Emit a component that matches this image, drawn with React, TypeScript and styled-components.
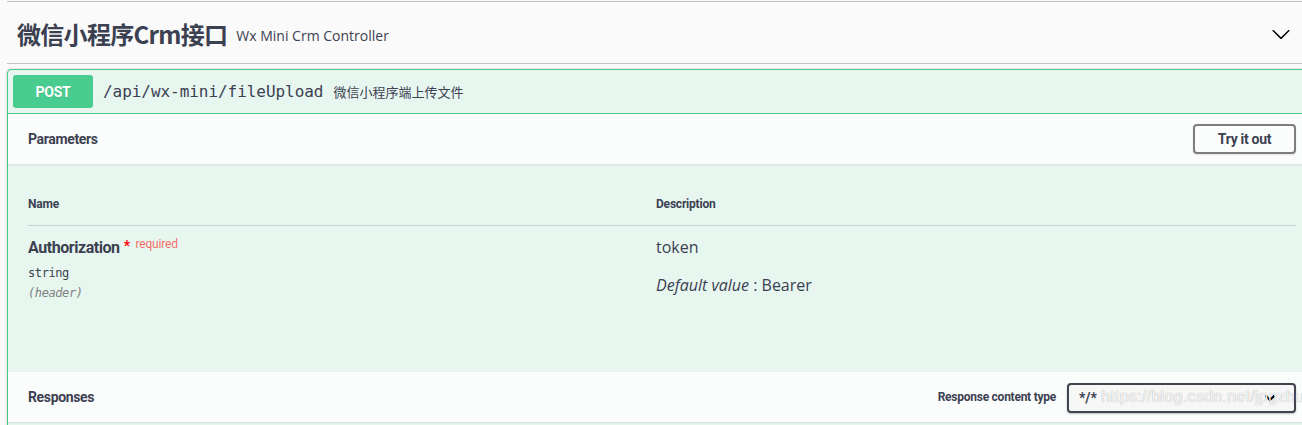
import React from "react";
import styled, { createGlobalStyle } from "styled-components";

const Global = createGlobalStyle`
  html, body { margin: 0; padding: 0; background: #fafafa; overflow: hidden; }
  body { font-family: "Open Sans", "Noto Sans CJK SC", sans-serif; color: #3b4151; }
  * { box-sizing: border-box; }
`;

const TITLE_FONT = `"Roboto", "Noto Sans CJK SC", sans-serif`;
const MONO = `"DejaVu Sans Mono", "Liberation Mono", monospace`;

const Page = styled.div`
  width: 1310px;
  margin-left: 7px;
  padding-top: 1px;
`;

const TagHeader = styled.div`
  display: flex;
  align-items: center;
  height: 63px;
  padding: 3px 26px 0 10px;
  border-top: 1px solid rgba(59, 65, 81, 0.3);
  border-bottom: 1px solid rgba(59, 65, 81, 0.3);
  margin-bottom: 5px;
`;

const TagTitle = styled.h3`
  margin: 0;
  font-family: "Noto Sans CJK SC", sans-serif;
  font-weight: 700;
  font-size: 24px;
  line-height: 30px;
  color: #3b4151;
  letter-spacing: -0.7px;
`;

const TagDesc = styled.small`
  font-family: "Open Sans", sans-serif;
  font-size: 14px;
  font-weight: 400;
  margin-left: 9px;
  color: #3b4151;
  flex: 1;
  padding-top: 2px;
`;

const Arrow = styled.svg`
  width: 20px;
  height: 20px;
  fill: #000;
  flex: none;
`;

const OpBlock = styled.div`
  border: 1px solid #49cc90;
  border-radius: 4px;
  background: #e8f6f0;
  box-shadow: 0 0 3px rgba(0, 0, 0, 0.19);
`;

const Summary = styled.div`
  display: flex;
  align-items: center;
  padding: 5px;
  border-bottom: 1px solid #49cc90;
`;

const Method = styled.span`
  display: inline-flex;
  align-items: center;
  justify-content: center;
  width: 80px;
  height: 33px;
  border-radius: 3px;
  background: #49cc90;
  color: #fff;
  font-family: ${TITLE_FONT};
  font-weight: 700;
  font-size: 14px;
  letter-spacing: -0.2px;
  text-shadow: 0 1px 0 rgba(0, 0, 0, 0.1);
`;

const Path = styled.span`
  font-family: ${MONO};
  font-size: 16px;
  font-weight: 400;
  color: #3b4151;
  margin-left: 10px;
  letter-spacing: -0.05px;
`;

const SummaryDesc = styled.span`
  font-family: "Noto Sans CJK SC", sans-serif;
  font-size: 13px;
  color: #3b4151;
  margin-left: 10px;
`;

const SectionHeader = styled.div`
  display: flex;
  align-items: center;
  min-height: 50px;
  padding: 8px 20px;
  background: rgba(255, 255, 255, 0.8);
  box-shadow: 0 1px 2px rgba(0, 0, 0, 0.1);
  position: relative;
`;

const SectionTitle = styled.h4`
  margin: 0;
  flex: 1;
  font-family: ${TITLE_FONT};
  font-weight: 700;
  font-size: 14px;
  letter-spacing: -0.35px;
  color: #3b4151;
`;

const TryButton = styled.button`
  width: 103px;
  height: 30px;
  border: 2px solid #7d7d7d;
  border-radius: 4px;
  background: transparent;
  font-family: ${TITLE_FONT};
  font-weight: 700;
  font-size: 14px;
  letter-spacing: -0.3px;
  color: #3b4151;
  box-shadow: 0 1px 2px rgba(0, 0, 0, 0.1);
`;

const TableContainer = styled.div`
  height: 208px;
  padding: 20px;
`;

const Grid = styled.div`
  display: grid;
  grid-template-columns: 628px 1fr;
`;

const HeadCell = styled.div`
  font-family: ${TITLE_FONT};
  font-weight: 700;
  font-size: 12px;
  letter-spacing: -0.2px;
  line-height: 17px;
  padding: 12px 0;
  border-bottom: 1px solid rgba(59, 65, 81, 0.2);
  color: #3b4151;
`;

const Cell = styled.div`
  padding: 10px 0;
`;

const ParamName = styled.div`
  font-family: ${TITLE_FONT};
  font-weight: 700;
  font-size: 16px;
  line-height: 24px;
  letter-spacing: -0.45px;
  color: #3b4151;
`;

const Star = styled.span`
  color: red;
  font-size: 14px;
  margin-left: 4px;
  position: relative;
  top: -2px;
`;

const Required = styled.sup`
  font-family: ${TITLE_FONT};
  font-weight: 400;
  font-size: 12px;
  letter-spacing: -0.2px;
  color: rgba(255, 0, 0, 0.6);
  margin-left: 6px;
  position: relative;
  top: -5px;
  vertical-align: baseline;
`;

const ParamType = styled.div`
  font-family: ${MONO};
  font-size: 12px;
  line-height: 15px;
  padding: 5px 0 0;
  color: #3b4151;
  letter-spacing: -0.4px;
`;

const ParamIn = styled.div`
  font-family: ${MONO};
  font-size: 12px;
  line-height: 15px;
  padding: 5px 0 0;
  font-style: italic;
  color: gray;
  letter-spacing: -0.4px;
`;

const DescText = styled.p`
  margin: 0;
  font-family: "Open Sans", sans-serif;
  font-size: 16px;
  line-height: 22px;
  color: #3b4151;
`;

const DefaultText = styled(DescText)`
  margin-top: 16px;
`;

const ContentTypeLabel = styled.label`
  font-family: ${TITLE_FONT};
  font-weight: 700;
  font-size: 12px;
  letter-spacing: -0.25px;
  color: #3b4151;
  margin-right: 11px;
`;

const Select = styled.div`
  display: flex;
  align-items: center;
  justify-content: space-between;
  width: 229px;
  height: 30px;
  margin-top: 1px;
  padding: 0 18px 0 10px;
  border: 2px solid #41444e;
  border-radius: 4px;
  background: #f7f7f7;
  box-shadow: 0 1px 2px rgba(0, 0, 0, 0.25);
  font-family: ${TITLE_FONT};
  font-weight: 700;
  font-size: 14px;
  color: #3b4151;
`;

const Watermark = styled.span`
  position: absolute;
  left: 1093px;
  top: 16px;
  font-family: "Liberation Sans", Arial, sans-serif;
  font-size: 16px;
  letter-spacing: 0.3px;
  white-space: nowrap;
  color: rgba(255, 255, 255, 0.92);
  text-shadow: 0 0 1px rgba(0, 0, 0, 0.4);
  pointer-events: none;
`;

const BodyPad = styled.div`
  height: 20px;
`;

export default function App() {
  return (
    <>
      <Global />
      <Page>
        <TagHeader>
          <TagTitle>微信小程序Crm接口</TagTitle>
          <TagDesc>Wx Mini Crm Controller</TagDesc>
          <Arrow viewBox="0 0 20 20">
            <path d="M17.418 6.109c.272-.268.709-.268.979 0s.271.701 0 .969l-7.908 7.83c-.27.268-.707.268-.979 0l-7.908-7.830c-.27-.268-.27-.701 0-.969.271-.268.709-.268.979 0L10 13.25l7.418-7.141z" />
          </Arrow>
        </TagHeader>
        <OpBlock>
          <Summary>
            <Method>POST</Method>
            <Path>/api/wx-mini/fileUpload</Path>
            <SummaryDesc>微信小程序端上传文件</SummaryDesc>
          </Summary>
          <SectionHeader>
            <SectionTitle>Parameters</SectionTitle>
            <TryButton>Try it out</TryButton>
          </SectionHeader>
          <TableContainer>
            <Grid>
              <HeadCell>Name</HeadCell>
              <HeadCell>Description</HeadCell>
              <Cell>
                <ParamName>
                  Authorization<Star>*</Star>
                  <Required>required</Required>
                </ParamName>
                <ParamType>string</ParamType>
                <ParamIn>(header)</ParamIn>
              </Cell>
              <Cell>
                <DescText>token</DescText>
                <DefaultText>
                  <i>Default value</i> : Bearer
                </DefaultText>
              </Cell>
            </Grid>
          </TableContainer>
          <SectionHeader>
            <SectionTitle>Responses</SectionTitle>
            <ContentTypeLabel>Response content type</ContentTypeLabel>
            <Select>
              <span>*/*</span>
              <svg width="12" height="8" viewBox="0 0 12 8">
                <path d="M1.5 1.5 L6 6 L10.5 1.5" fill="none" stroke="#000" strokeWidth="2" />
              </svg>
            </Select>
            <Watermark>https://blog.csdn.net/jpgzhu</Watermark>
          </SectionHeader>
          <BodyPad />
        </OpBlock>
      </Page>
    </>
  );
}
